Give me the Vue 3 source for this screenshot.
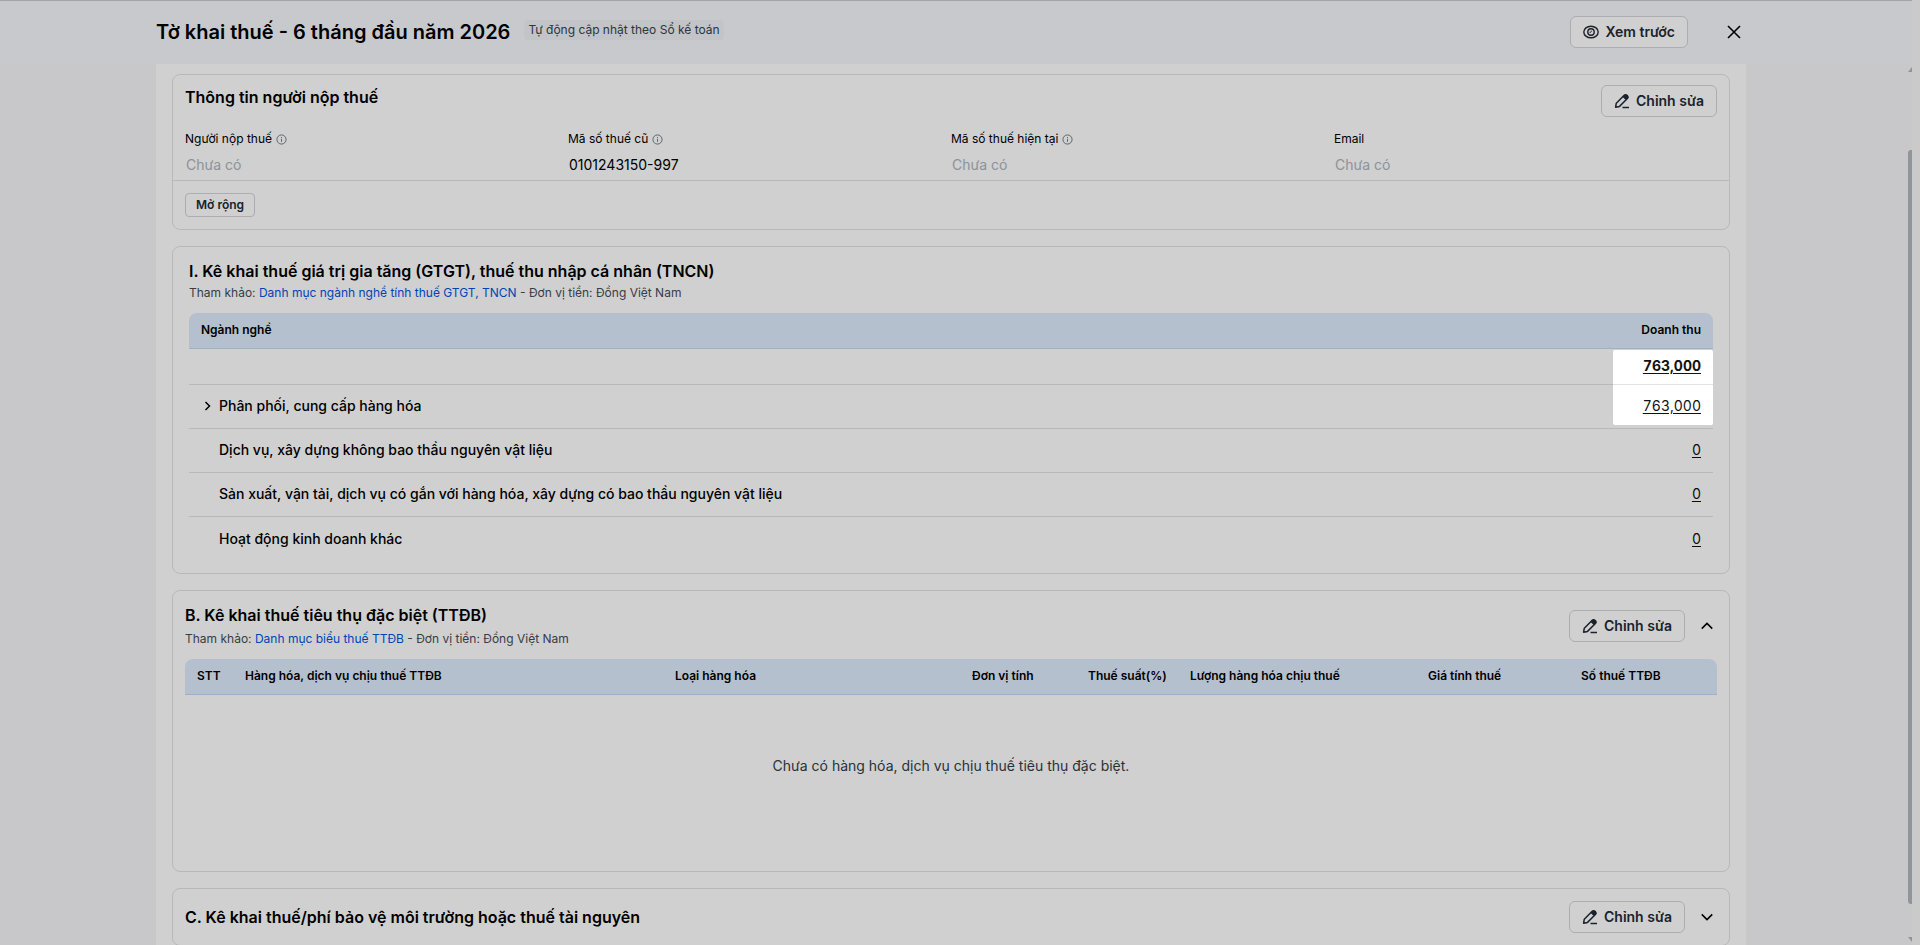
<script setup>
import { ref } from 'vue';

const taxpayer = ref([
  { id: 'name', label: 'Người nộp thuế', value: '', hint: true },
  { id: 'old-code', label: 'Mã số thuế cũ', value: '0101243150-997', hint: true },
  { id: 'code', label: 'Mã số thuế hiện tại', value: '', hint: true },
  { id: 'email', label: 'Email', value: '', hint: false },
]);

const total = ref('763,000');

const industries = ref([
  { name: 'Phân phối, cung cấp hàng hóa', revenue: '763,000', children: true },
  { name: 'Dịch vụ, xây dựng không bao thầu nguyên vật liệu', revenue: '0' },
  { name: 'Sản xuất, vận tải, dịch vụ có gắn với hàng hóa, xây dựng có bao thầu nguyên vật liệu', revenue: '0' },
  { name: 'Hoạt động kinh doanh khác', revenue: '0' },
]);

const showExcise = ref(true);
const showEnvironment = ref(false);
</script>

<template>
  <div class="page">
    <svg class="sprite" aria-hidden="true">
      <symbol id="pen" viewBox="0 0 16 16">
        <path d="M1.6 14.2l.7-4L10.2 2.3a1.9 1.9 0 0 1 2.7 0l.5.5a1.9 1.9 0 0 1 0 2.7L5.5 13.4z" fill="none" stroke="currentColor" stroke-width="1.5" stroke-linejoin="round" />
        <path d="M8.6 3.9l1.8-1.8a2 2 0 0 1 2.8 0l.6.6a2 2 0 0 1 0 2.800L12 7.3z" fill="currentColor" />
        <path d="M8.5 14.500h6.5" stroke="currentColor" stroke-width="1.5" />
      </symbol>
      <symbol id="info" viewBox="0 0 12 12">
        <circle cx="6" cy="6" r="5" fill="none" stroke="currentColor" />
        <path d="M6 5.3v3.200M6 3.400v1.100" stroke="currentColor" />
      </symbol>
    </svg>

    <div class="window">
      <header class="topbar">
        <div class="topbar-inner">
          <div class="heading">
            <h1>Tờ khai thuế - 6 tháng đầu năm 2026</h1>
            <span class="badge">Tự động cập nhật theo Sổ kế toán</span>
          </div>
          <div class="topbar-actions">
            <button class="btn" type="button">
              <svg class="icon" viewBox="0 0 16 16" fill="none" stroke="currentColor" stroke-width="1.400">
                <ellipse cx="8" cy="8" rx="7.200" ry="5.800" />
                <circle cx="8" cy="8" r="3.200" />
                <path d="M6.500 8.300c1 .6 2-.3 1.700-1.700" stroke-width="1" />
              </svg>
              Xem trước
            </button>
            <button class="icon-btn" type="button" aria-label="Đóng">
              <svg class="icon" viewBox="0 0 16 16" fill="none" stroke="currentColor" stroke-width="1.600">
                <path d="M2 2l12 12M14 2L2 14" />
              </svg>
            </button>
          </div>
        </div>
      </header>

      <main class="sheet">
        <section class="card">
          <div class="card-head info-head">
            <h2>Thông tin người nộp thuế</h2>
            <button class="btn" type="button"><svg class="icon"><use href="#pen" /></svg>Chỉnh sửa</button>
          </div>
          <div class="fields">
            <div class="field" v-for="f in taxpayer" :key="f.id">
              <label :for="f.id">{{ f.label }} <svg v-if="f.hint" class="info"><use href="#info" /></svg></label>
              <input :id="f.id" v-model="f.value" type="text" placeholder="Chưa có" readonly />
            </div>
          </div>
          <div class="card-foot">
            <button class="btn btn-small" type="button">Mở rộng</button>
          </div>
        </section>

        <section class="card revenue">
          <h2>I. Kê khai thuế giá trị gia tăng (GTGT), thuế thu nhập cá nhân (TNCN)</h2>
          <p class="note">Tham khảo: <a href="#">Danh mục ngành nghề tính thuế GTGT, TNCN</a> - Đơn vị tiền: Đồng Việt Nam</p>
          <div class="table-wrap">
            <table class="revenue-table">
              <thead>
                <tr>
                  <th>Ngành nghề</th>
                  <th class="right">Doanh thu</th>
                </tr>
              </thead>
              <tbody>
                <tr class="total">
                  <td></td>
                  <td class="right"><a href="#">{{ total }}</a></td>
                </tr>
                <tr v-for="row in industries" :key="row.name">
                  <td>
                    <div class="industry">
                      <svg v-if="row.children" class="caret" viewBox="0 0 12 12" fill="none" stroke="currentColor" stroke-width="1.500">
                        <path d="M4 2l4 4-4 4" />
                      </svg>
                      <span v-else class="caret"></span>
                      {{ row.name }}
                    </div>
                  </td>
                  <td class="right"><a href="#">{{ row.revenue }}</a></td>
                </tr>
              </tbody>
            </table>
            <!-- spotlight: its shadow dims the rest of the page -->
            <div class="spotlight"></div>
          </div>
        </section>

        <section class="card excise">
          <div class="card-head">
            <div>
              <h2>B. Kê khai thuế tiêu thụ đặc biệt (TTĐB)</h2>
              <p class="note">Tham khảo: <a href="#">Danh mục biểu thuế TTĐB</a> - Đơn vị tiền: Đồng Việt Nam</p>
            </div>
            <div class="card-actions">
              <button class="btn" type="button"><svg class="icon"><use href="#pen" /></svg>Chỉnh sửa</button>
              <button class="icon-btn" type="button" aria-label="Thu gọn" @click="showExcise = !showExcise">
                <svg class="icon" viewBox="0 0 16 16" fill="none" stroke="currentColor" stroke-width="1.800">
                  <path :d="showExcise ? 'M2 11l6-6 6 6' : 'M2 5l6 6 6-6'" />
                </svg>
              </button>
            </div>
          </div>
          <table v-if="showExcise" class="excise-table">
            <colgroup>
              <col class="c-index" />
              <col />
              <col class="c-type" />
              <col class="c-unit" />
              <col class="c-rate" />
              <col class="c-amount" />
              <col class="c-price" />
              <col class="c-tax" />
            </colgroup>
            <thead>
              <tr>
                <th>STT</th>
                <th>Hàng hóa, dịch vụ chịu thuế TTĐB</th>
                <th>Loại hàng hóa</th>
                <th>Đơn vị tính</th>
                <th>Thuế suất(%)</th>
                <th>Lượng hàng hóa chịu thuế</th>
                <th>Giá tính thuế</th>
                <th>Số thuế TTĐB</th>
              </tr>
            </thead>
            <tbody>
              <tr>
                <td class="empty" colspan="8">Chưa có hàng hóa, dịch vụ chịu thuế tiêu thụ đặc biệt.</td>
              </tr>
            </tbody>
          </table>
        </section>

        <section class="card environment">
          <div class="card-head">
            <h2>C. Kê khai thuế/phí bảo vệ môi trường hoặc thuế tài nguyên</h2>
            <div class="card-actions">
              <button class="btn" type="button"><svg class="icon"><use href="#pen" /></svg>Chỉnh sửa</button>
              <button class="icon-btn" type="button" aria-label="Mở rộng" @click="showEnvironment = !showEnvironment">
                <svg class="icon" viewBox="0 0 16 16" fill="none" stroke="currentColor" stroke-width="1.800">
                  <path :d="showEnvironment ? 'M2 11l6-6 6 6' : 'M2 5l6 6 6-6'" />
                </svg>
              </button>
            </div>
          </div>
        </section>
      </main>

      <div class="scrollbar">
        <span class="arrow-up"></span>
        <span class="thumb"></span>
        <span class="arrow-down"></span>
      </div>
    </div>
  </div>
</template>

<style>
body {
  background: #f8f8f8;
}
</style>

<style scoped>
.page {
  height: 100vh;
  padding-right: 8px;
  overflow: hidden;
  box-sizing: border-box;
  background: #f8f8f8;
  color: #000;
  font-family: Inter, "Liberation Sans", sans-serif;
  font-size: 14px;
  line-height: 20px;
}

.page * {
  box-sizing: border-box;
}

.window {
  position: relative;
  height: 100%;
  background: #f5f6f8;
}

.sprite {
  position: absolute;
  width: 0;
  height: 0;
}

h1,
h2,
p {
  margin: 0;
}

h1 {
  font-size: 20px;
  font-weight: 600;
  line-height: 28px;
}

h2 {
  font-size: 16px;
  font-weight: 600;
  line-height: 24px;
}

/* header */
.topbar {
  height: 64px;
  padding: 0 166px 0 156px;
  border-top: 1px solid #cacacc;
  background: #f6f7fa;
}

.topbar-inner {
  display: flex;
  justify-content: space-between;
  align-items: center;
  height: 62px;
  padding-right: 2px;
}

.heading {
  display: flex;
  align-items: center;
  gap: 14px;
}

.badge {
  margin-bottom: 4px;
  padding: 0 4px;
  border-radius: 4px;
  background: #eef1f4;
  color: #344350;
  font-size: 12px;
}

.topbar-actions {
  display: flex;
  align-items: center;
  gap: 36px;
}

/* buttons */
.btn {
  display: inline-flex;
  align-items: center;
  justify-content: center;
  gap: 6px;
  height: 32px;
  padding: 0 12px;
  border: 1px solid #d2d5da;
  border-radius: 6px;
  background: #fff;
  color: #212b36;
  font-family: inherit;
  font-size: 14px;
  font-weight: 600;
  line-height: 20px;
  white-space: nowrap;
}

.btn-small {
  height: 24px;
  padding: 0 10px;
  border-radius: 4px;
  font-size: 12px;
  line-height: 16px;
}

.icon {
  width: 16px;
  height: 16px;
}

.icon-btn {
  display: flex;
  align-items: center;
  justify-content: center;
  width: 20px;
  height: 20px;
  padding: 0;
  border: 0;
  background: none;
  color: #000;
}

.card-actions .icon-btn .icon {
  width: 14px;
  height: 14px;
}

/* cards */
.sheet {
  display: flex;
  flex-direction: column;
  gap: 16px;
  margin: 0 166px 0 156px;
  padding: 10px 16px 16px;
  background: #fff;
}

.card {
  border: 1px solid #e3e3e6;
  border-radius: 8px;
  background: #fff;
}

.card-head {
  display: flex;
  justify-content: space-between;
  align-items: center;
}

.card-actions {
  display: flex;
  align-items: center;
  gap: 12px;
}

.info-head {
  align-items: flex-start;
  padding: 10px 12px;
}

.fields {
  display: grid;
  grid-template-columns: repeat(4, 1fr);
  padding: 2px 12px 1px;
  border-bottom: 1px solid #e3e3e6;
}

.field {
  display: flex;
  flex-direction: column;
}

.field label {
  display: flex;
  align-items: center;
  gap: 4px;
  font-size: 12px;
}

.info {
  width: 11px;
  height: 11px;
  color: #66717f;
}

.field input {
  height: 30px;
  padding: 0 1px;
  border: 0;
  background: none;
  color: #000;
  font-family: inherit;
  font-size: 14px;
}

.field input::placeholder {
  color: #adb4bc;
}

.card-foot {
  display: flex;
  padding: 12px;
}

.note {
  color: #444c56;
  font-size: 12px;
}

.note a {
  color: #0055e0;
  text-decoration: none;
}

/* tables */
table {
  width: 100%;
  border-collapse: separate;
  border-spacing: 0;
}

th {
  height: 36px;
  padding: 0 12px 2px;
  border-bottom: 1px solid #c0d9f5;
  background: #deecfd;
  font-size: 12px;
  font-weight: 600;
  text-align: left;
  white-space: nowrap;
}

th:first-child {
  border-top-left-radius: 8px;
}

th:last-child {
  border-top-right-radius: 8px;
}

.right {
  text-align: right;
}

.revenue {
  padding: 12px 16px;
}

.table-wrap {
  position: relative;
  margin-top: 10px;
}

.revenue-table td {
  height: 44px;
  padding: 0 12px 2px;
  border-bottom: 1px solid #e3e3e6;
  font-weight: 500;
}

.revenue-table td.right {
  font-weight: 400;
  font-variant-numeric: tabular-nums;
}

.revenue-table .total td {
  height: 36px;
  font-weight: 700;
}

.revenue-table tr:last-child td {
  padding-bottom: 0;
  border-bottom: 0;
}

.revenue-table a {
  color: #111;
  text-underline-offset: 2px;
}

.industry {
  display: flex;
  align-items: center;
  gap: 5px;
}

.caret {
  width: 13px;
  height: 12px;
}

.spotlight {
  position: absolute;
  z-index: 1;
  top: 37px;
  right: 0;
  width: 100px;
  height: 75px;
  border-radius: 2px;
  box-shadow: 0 0 0 4000px rgba(0, 0, 0, 0.184);
  pointer-events: none;
}

.excise {
  padding: 12px;
}

.excise .note {
  margin-top: 2px;
}

.excise-table {
  margin-top: 10px;
  table-layout: fixed;
}

.c-index {
  width: 48px;
}

.c-type {
  width: 297px;
}

.c-unit {
  width: 116px;
}

.c-rate {
  width: 102px;
}

.c-amount {
  width: 238px;
}

.c-price {
  width: 153px;
}

.c-tax {
  width: 148px;
}

.empty {
  height: 164px;
  padding: 0 0 22px;
  color: #333d47;
  text-align: center;
}

.environment {
  padding: 12px;
}

/* slim scrollbar at the edge of the sheet */
.scrollbar {
  position: absolute;
  top: 64px;
  right: 0;
  bottom: 0;
  display: flex;
  flex-direction: column;
  width: 4px;
  padding: 3px 0;
}

.arrow-up,
.arrow-down {
  width: 4px;
  height: 5px;
  background: #b3b5b8;
  clip-path: polygon(100% 0, 100% 100%, 0 100%);
}

.arrow-down {
  clip-path: polygon(0 0, 100% 0, 100% 100%);
}

.thumb {
  flex: 1;
  margin: 78px 0 33px;
  border-radius: 3px 0 0 3px;
  background: #b1b7bf;
}
</style>
